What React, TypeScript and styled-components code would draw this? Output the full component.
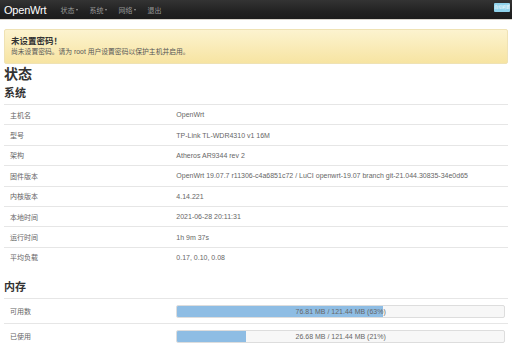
import styled, { createGlobalStyle } from 'styled-components';

const GlobalStyle = createGlobalStyle`
  body {
    margin: 0;
    background: #fff;
    font-family: "Liberation Sans", "Noto Sans CJK SC", sans-serif;
    color: #555;
  }
`;

const Navbar = styled.div`
  height: 19px;
  background: linear-gradient(#333, #222 60%, #1c1c1c);
  border-bottom: 1px solid #d8d4cc;
  display: flex;
  align-items: center;
  padding: 0 2px 0 4px;
`;

const Brand = styled.div`
  color: #fff;
  font-size: 11px;
  letter-spacing: -0.2px;
  margin-right: 14px;
`;

const NavItem = styled.div`
  color: #999;
  font-size: 7px;
  margin-right: 11px;
  display: flex;
  align-items: center;
  gap: 2px;
`;

const Caret = styled.span`
  display: inline-block;
  border-left: 1.5px solid transparent;
  border-right: 1.5px solid transparent;
  border-top: 2px solid #999;
`;

const Spacer = styled.div`
  flex: 1;
`;

const Badge = styled.span`
  align-self: flex-start;
  margin-top: 3px;
  width: 16px;
  height: 9px;
  background: #8fd3ec;
  border-radius: 1px;
  color: #fff;
  font-size: 4px;
  line-height: 9px;
  text-align: center;
  overflow: hidden;
  white-space: nowrap;
`;

const Content = styled.div`
  padding: 9px 4px 0;
`;

const Alert = styled.div`
  background: linear-gradient(#fcf3cf, #f7e4a2);
  border: 1px solid #efe2b4;
  border-radius: 2px;
  padding: 6px 6px 7px;
`;

const AlertTitle = styled.div`
  color: #333;
  font-size: 8.5px;
  font-weight: bold;
  line-height: 11px;
`;

const AlertText = styled.div`
  color: #555;
  font-size: 6.8px;
  line-height: 9px;
`;

const PageTitle = styled.h2`
  margin: 1px 0 0;
  color: #333;
  font-size: 14px;
  line-height: 18px;
`;

const SectionTitle = styled.h3<{ $top: number }>`
  margin: ${p => p.$top}px 0 0;
  color: #333;
  font-size: 11px;
  line-height: 15px;
  padding-bottom: 3px;
`;

const Table = styled.div``;

const Row = styled.div<{ $h: number; $last?: boolean }>`
  display: grid;
  grid-template-columns: 33% 1fr;
  align-items: center;
  height: ${p => p.$h}px;
  border-top: 1px solid #e6e6e6;
  border-bottom: ${p => (p.$last ? '1px solid #e6e6e6' : 'none')};
  font-size: 7px;
  color: #666;
`;

const Cell = styled.div`
  padding-left: 6px;
  white-space: nowrap;
`;

const Bar = styled.div`
  position: relative;
  height: 11px;
  margin: 0 3px 0 6px;
  background: #f7f7f7;
  border: 1px solid #ddd;
  border-radius: 2px;
  overflow: hidden;
`;

const BarFill = styled.div`
  height: 100%;
  background: #8ebde4;
`;

const BarText = styled.div`
  position: absolute;
  inset: 0;
  display: flex;
  align-items: center;
  justify-content: center;
  font-size: 7px;
  color: #666;
`;

const system: [string, string][] = [
  ['主机名', 'OpenWrt'],
  ['型号', 'TP-Link TL-WDR4310 v1 16M'],
  ['架构', 'Atheros AR9344 rev 2'],
  ['固件版本', 'OpenWrt 19.07.7 r11306-c4a6851c72 / LuCI openwrt-19.07 branch git-21.044.30835-34e0d65'],
  ['内核版本', '4.14.221'],
  ['本地时间', '2021-06-28 20:11:31'],
  ['运行时间', '1h 9m 37s'],
  ['平均负载', '0.17, 0.10, 0.08'],
];

const memory: [string, string, number][] = [
  ['可用数', '76.81 MB / 121.44 MB (63%)', 63],
  ['已使用', '26.68 MB / 121.44 MB (21%)', 21],
];

export default function App() {
  return (
    <>
      <GlobalStyle />
      <Navbar>
        <Brand>OpenWrt</Brand>
        <NavItem>状态 <Caret /></NavItem>
        <NavItem>系统 <Caret /></NavItem>
        <NavItem>网络 <Caret /></NavItem>
        <NavItem>退出</NavItem>
        <Spacer />
        <Badge>自动刷新</Badge>
      </Navbar>
      <Content>
        <Alert>
          <AlertTitle>未设置密码！</AlertTitle>
          <AlertText>尚未设置密码。请为 root 用户设置密码以保护主机并启用。</AlertText>
        </Alert>
        <PageTitle>状态</PageTitle>
        <SectionTitle $top={3}>系统</SectionTitle>
        <Table>
          {system.map(([k, v]) => (
            <Row key={k} $h={19.4}>
              <Cell>{k}</Cell>
              <Cell>{v}</Cell>
            </Row>
          ))}
        </Table>
        <SectionTitle $top={13}>内存</SectionTitle>
        <Table>
          {memory.map(([k, v, pct], i) => (
            <Row key={k} $h={24} $last={i === memory.length - 1}>
              <Cell>{k}</Cell>
              <Bar>
                <BarFill style={{ width: `${pct}%` }} />
                <BarText>{v}</BarText>
              </Bar>
            </Row>
          ))}
        </Table>
      </Content>
    </>
  );
}
